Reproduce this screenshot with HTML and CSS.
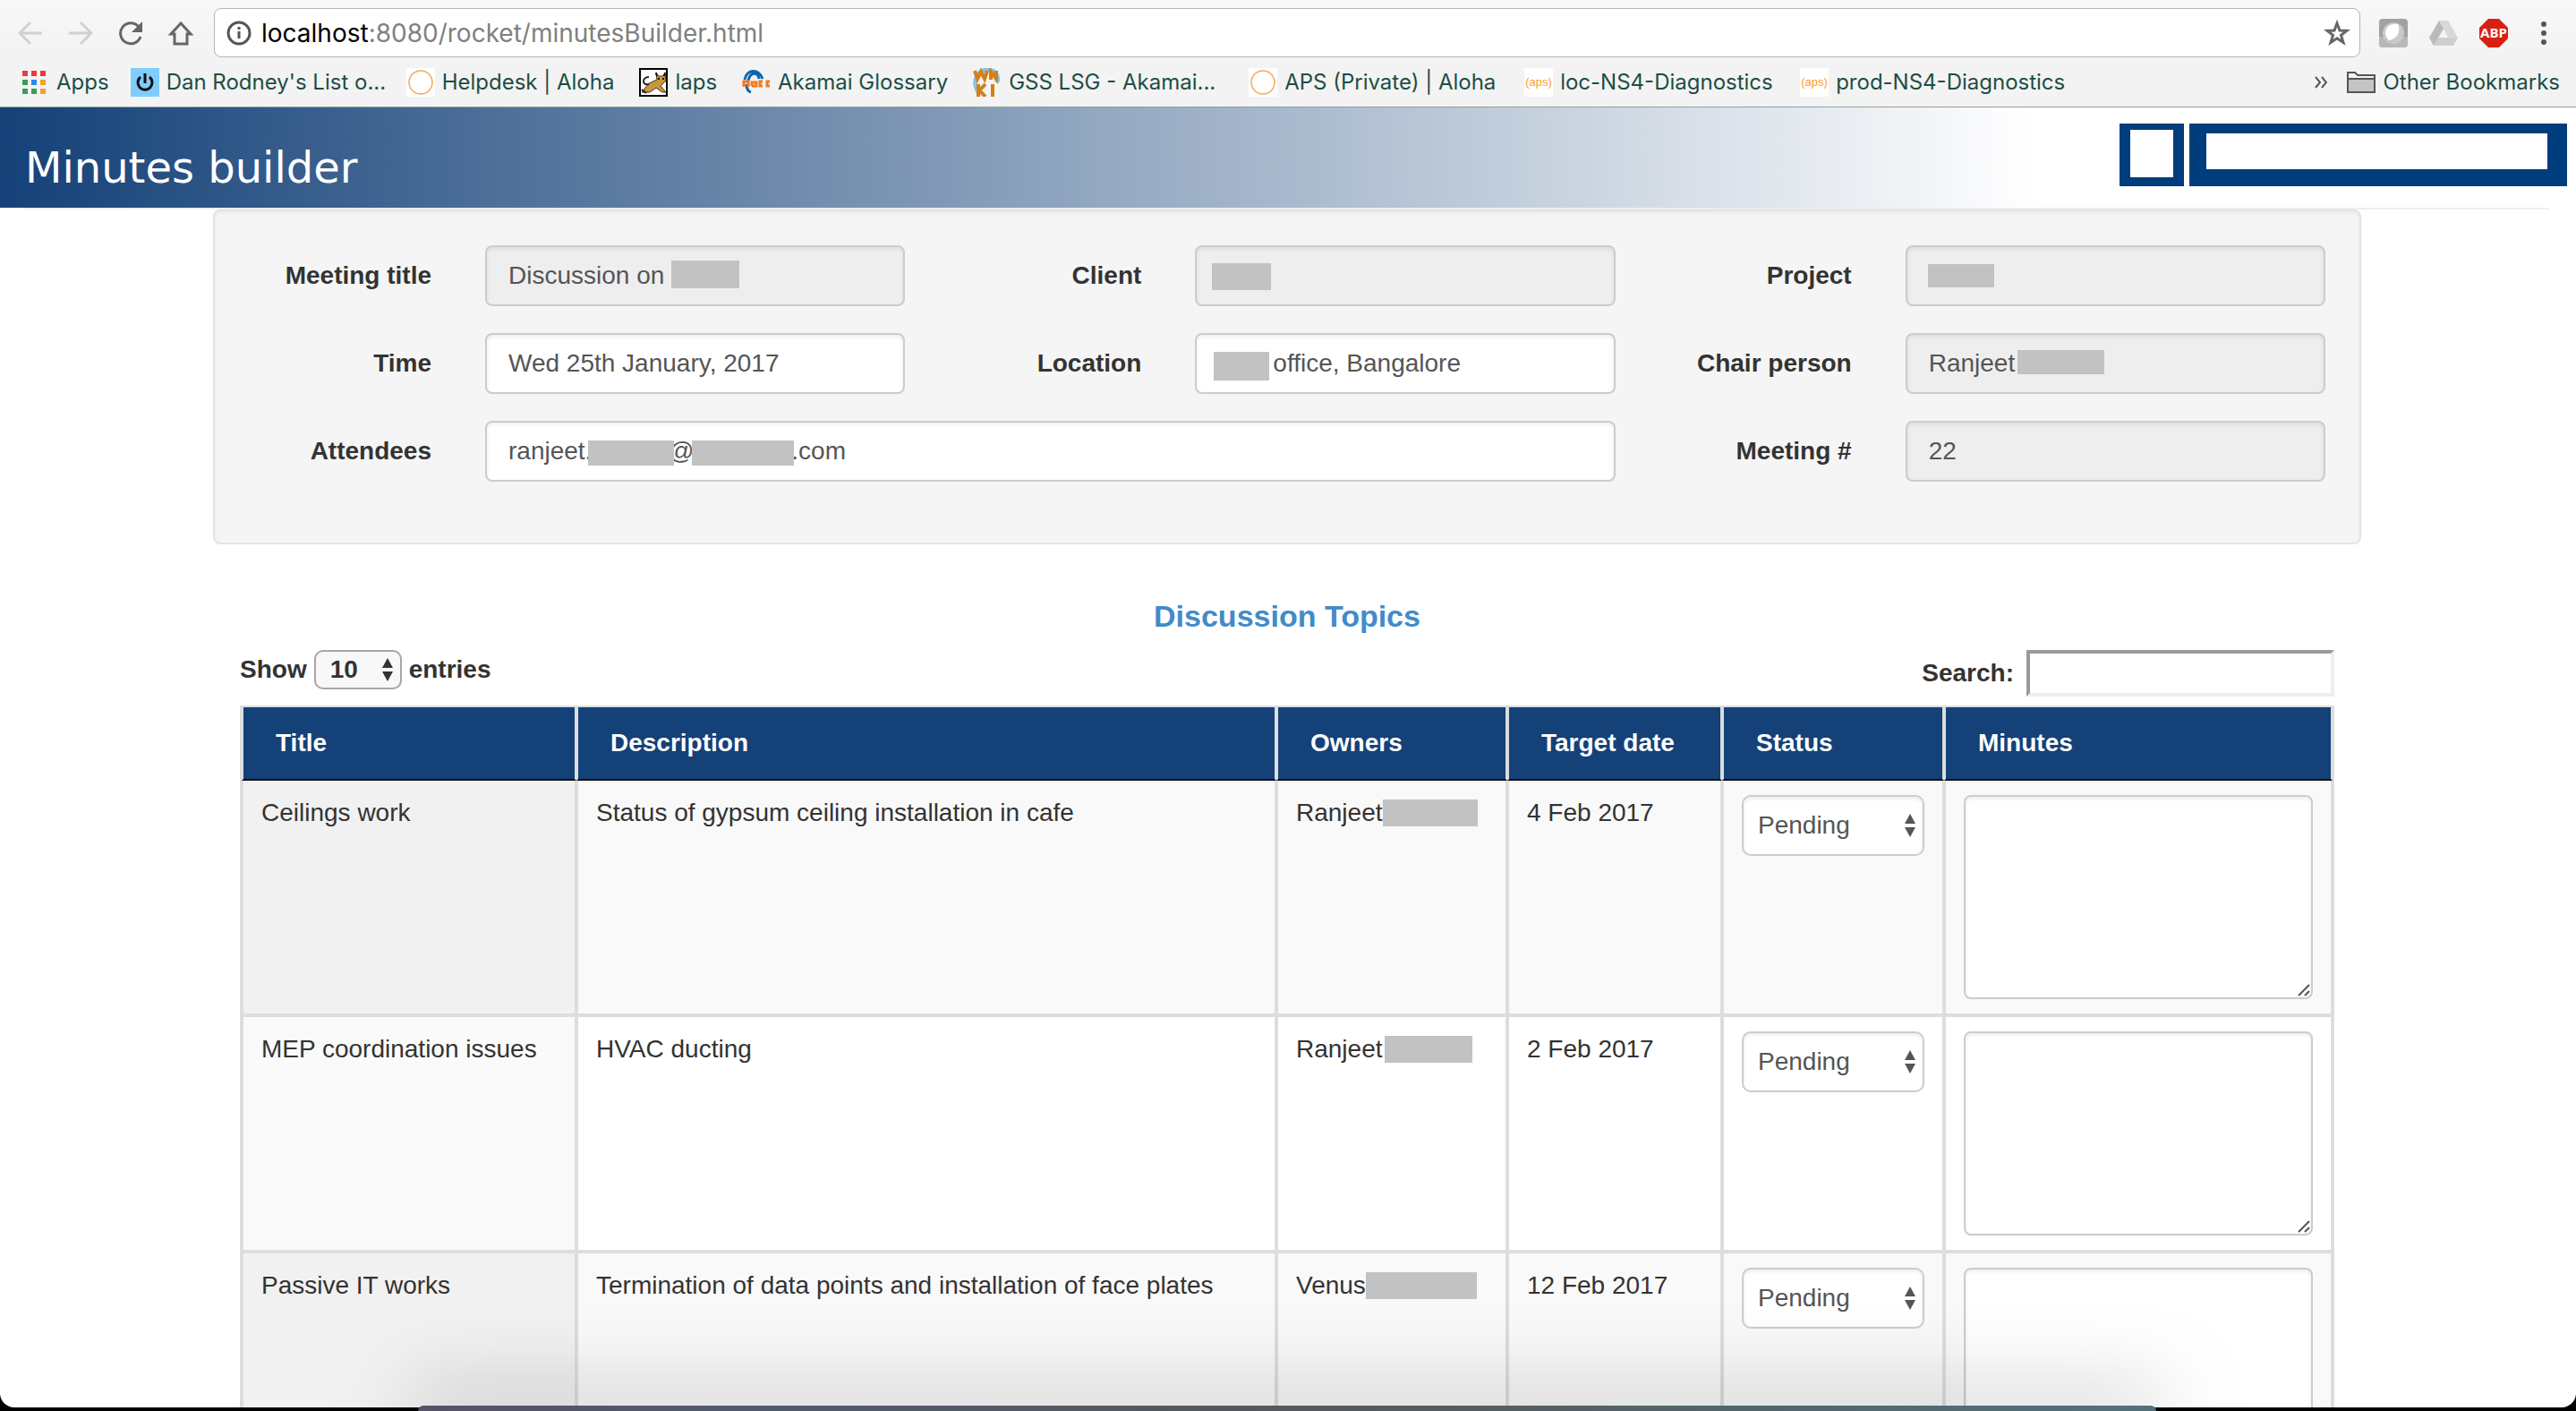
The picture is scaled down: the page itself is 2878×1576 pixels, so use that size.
FILE: index.html
```html
<!DOCTYPE html>
<html lang="en">
<head>
<meta charset="utf-8">
<title>Minutes builder</title>
<link rel="stylesheet" href="styles.css">
</head>
<body>
<div class="window">
  <div class="chrome">
    <div class="toolbar">
      <div class="nav">
        <button class="icon-btn" aria-label="Back"><svg width="28" height="28" viewBox="0 0 28 28" fill="none" stroke="#d0d0d0" stroke-width="3"><path d="M27 14H3M14 2L2 14l12 12"/></svg></button>
        <button class="icon-btn" aria-label="Forward"><svg width="28" height="28" viewBox="0 0 28 28" fill="none" stroke="#d0d0d0" stroke-width="3"><path d="M1 14h24M14 2l12 12-12 12"/></svg></button>
        <button class="icon-btn" aria-label="Reload"><svg width="28" height="28" viewBox="0 0 28 28"><path d="M23 7A11.500 11.500 0 1 0 25 18" fill="none" stroke="#666" stroke-width="3"/><path d="M27 1v12H15z" fill="#666"/></svg></button>
        <button class="icon-btn" aria-label="Home"><svg width="28" height="28" viewBox="0 0 28 28" fill="none" stroke="#666" stroke-width="3"><path d="M14 3L3 15h4v11h14V15h4z"/></svg></button>
      </div>
      <div class="address">
        <svg width="28" height="28" viewBox="0 0 28 28"><circle cx="14" cy="14" r="12" fill="none" stroke="#555" stroke-width="3"/><path d="M12.500 12h3v8h-3zM12.500 7h3v3h-3z" fill="#555"/></svg>
        <div class="url"><span class="url-host">localhost</span>:8080/rocket/minutesBuilder.html</div>
        <button class="icon-btn" aria-label="Bookmark this page"><svg width="30" height="30" viewBox="0 0 30 30" fill="none" stroke="#666" stroke-width="3"><path d="M15 4l3 8 8 .300-6.500 5 2.500 8.200-7-4.700-7 4.700 2.500-8.200L4 12.300l8-.300z"/></svg></button>
      </div>
      <div class="extensions">
        <button class="icon-btn" aria-label="Extension"><svg width="32" height="32" viewBox="0 0 32 32"><rect width="32" height="32" rx="4" fill="#a2a2a2"/><path d="M0 20h32v8a4 4 0 0 1-4 4H4a4 4 0 0 1-4-4z" fill="#b8b8b8"/><circle cx="16" cy="16" r="12" fill="#c9c9c9"/><path d="M21 6c4 9-2 17-10 18C4 18 6 4 21 6z" fill="#fff"/></svg></button>
        <button class="icon-btn" aria-label="Drive"><svg width="32" height="32" viewBox="0 0 32 32"><path d="M11 2h10l11 19H21z" fill="#d8d8d8"/><path d="M11 2l5 9L5 30 0 21z" fill="#b9b9b9"/><path d="M10 21h22l-5 9H5z" fill="#cfcfcf"/></svg></button>
        <button class="icon-btn" aria-label="Adblock Plus"><svg width="32" height="32" viewBox="0 0 32 32"><path d="M10 0h12l10 10v12L22 32H10L0 22V10z" fill="#d91f11"/><text x="16" y="21" class="abp">ABP</text></svg></button>
        <button class="icon-btn" aria-label="Menu"><svg width="32" height="32" viewBox="0 0 32 32" fill="#555"><circle cx="16" cy="6" r="3"/><circle cx="16" cy="16" r="3"/><circle cx="16" cy="26" r="3"/></svg></button>
      </div>
    </div>
    <nav class="bookmarks" aria-label="Bookmarks">
      <a class="bookmark bookmark-apps" href="#"><svg width="26" height="26" viewBox="0 0 26 26"><path d="M0 0h6v6H0zM10 0h6v6h-6zM20 0h6v6h-6z" fill="#f03a37"/><path d="M0 10h6v6H0zM0 20h6v6H0zM10 20h6v6h-6z" fill="#3a9b5a"/><path d="M10 10h6v6h-6z" fill="#2a86f0"/><path d="M20 10h6v6h-6zM20 20h6v6h-6z" fill="#f0a22a"/></svg>Apps</a>
      <a class="bookmark bookmark-wide" href="#"><svg width="32" height="32" viewBox="0 0 32 32"><path d="M0 0h32v32H0z" fill="#7fcdff"/><path d="M11 10a8 8 0 1 0 10 0M16 6v11" fill="none" stroke="#111" stroke-width="3"/></svg>Dan Rodney's List o...</a>
      <a class="bookmark" href="#"><svg width="32" height="32" viewBox="0 0 32 32"><path d="M0 0h32v32H0z" fill="#fff"/><circle cx="16" cy="16" r="13" fill="none" stroke="#f5a95c" stroke-width="1.500"/></svg>Helpdesk | Aloha</a>
      <a class="bookmark" href="#"><svg width="32" height="32" viewBox="0 0 32 32"><path d="M1 1h30v30H1z" fill="#fff" stroke="#000" stroke-width="2"/><path d="M19 6l3 3h4l3-3 1 8-4 4-2 2 6 7h-4l-7-5-7 5H3l8-10 9-4z" fill="#c8963c" stroke="#4a3510"/><path d="M19 5l1 4M29 5l-1 4M21 12h2M26 12h2" stroke="#111" stroke-width="2"/><path d="M11 18C3 20 3 10 11 10M3 24l5 4" fill="none" stroke="#222" stroke-width="2"/></svg>laps</a>
      <a class="bookmark" href="#"><svg width="32" height="32" viewBox="0 0 32 32"><path d="M3 13C5 1 19 0 23 12M7 14c2-10 11-10 12-2M5 18c0 5 1 8 5 9" fill="none" stroke="#0a66b0" stroke-width="3"/><path d="M2 21v-6h5v6M11 20v-4h5v4h-5M23 15h-3v5h3M31 15h-3v5h3" fill="none" stroke="#f47920" stroke-width="3"/></svg>Akamai Glossary</a>
      <a class="bookmark bookmark-wide" href="#"><svg width="32" height="32" viewBox="0 0 32 32"><path d="M6 27C-2 14 6 2 16 2c9 0 13 6 11 14" fill="none" stroke="#85c6e6" stroke-width="5"/><path d="M2 3l3 9 4-8 4 8 3-9M20 13V4l6 8V3M6 18v14M14 18l-7 7 7 7M22 18v14" fill="none" stroke="#d67f18" stroke-width="4"/></svg>GSS LSG - Akamai...</a>
      <a class="bookmark bookmark-wide" href="#"><svg width="32" height="32" viewBox="0 0 32 32"><path d="M0 0h32v32H0z" fill="#fff"/><circle cx="16" cy="16" r="13" fill="none" stroke="#f5a95c" stroke-width="1.500"/></svg>APS (Private) | Aloha</a>
      <a class="bookmark bookmark-wide" href="#"><svg width="32" height="32" viewBox="0 0 32 32"><path d="M0 0h32v32H0z" fill="#fff"/><text x="16" y="20" class="aps">(aps)</text></svg>loc-NS4-Diagnostics</a>
      <a class="bookmark" href="#"><svg width="32" height="32" viewBox="0 0 32 32"><path d="M0 0h32v32H0z" fill="#fff"/><text x="16" y="20" class="aps">(aps)</text></svg>prod-NS4-Diagnostics</a>
      <button class="icon-btn more" aria-label="More bookmarks"><svg width="14" height="14" viewBox="0 0 14 14" fill="none" stroke="#555" stroke-width="2"><path d="M1 1l5 6-5 6M8 1l5 6-5 6"/></svg></button>
      <a class="bookmark bookmark-other" href="#"><svg width="32" height="26" viewBox="0 0 32 26"><path d="M1 24V2h8l3 3h19v19z" fill="#f4f4f4" stroke="#555" stroke-width="2"/><path d="M1 9h30v15H1z" fill="#c4c4c4" stroke="#555" stroke-width="2"/></svg>Other Bookmarks</a>
    </nav>
  </div>

  <header class="banner">
    <h1>Minutes builder</h1>
    <div class="logo"><span class="logo-mark"></span><span class="logo-name"></span></div>
  </header>
  <hr class="rule">

  <main class="container">
    <form class="well">
      <label for="title">Meeting title</label>
      <div class="field"><input id="title" class="control readonly" value="Discussion on" readonly><span class="mask mask-title"></span></div>
      <label for="client">Client</label>
      <div class="field"><input id="client" class="control readonly" readonly><span class="mask mask-client"></span></div>
      <label for="project">Project</label>
      <div class="field"><input id="project" class="control readonly" readonly><span class="mask mask-project"></span></div>

      <label for="time">Time</label>
      <div class="field"><input id="time" class="control" value="Wed 25th January, 2017"></div>
      <label for="location">Location</label>
      <div class="field"><input id="location" class="control control-location" value="office, Bangalore"><span class="mask mask-location"></span></div>
      <label for="chair">Chair person</label>
      <div class="field"><input id="chair" class="control readonly" value="Ranjeet" readonly><span class="mask mask-chair"></span></div>

      <label for="attendees">Attendees</label>
      <div class="field field-wide"><input id="attendees" class="control" value="ranjeet.           @              .com"><span class="mask mask-name"></span><span class="mask mask-domain"></span></div>
      <label for="number">Meeting #</label>
      <div class="field"><input id="number" class="control readonly" value="22" readonly></div>
    </form>

    <section class="topics">
      <h2>Discussion Topics</h2>
      <div class="table-tools">
        <label class="length">Show
          <span class="picker"><select class="length-select"><option>10</option><option>25</option></select><svg width="14" height="26" viewBox="0 0 14 26" fill="#333"><path d="M7 0l6 11H1zM7 26l6-11H1z"/></svg></span>
          entries</label>
        <label class="filter">Search: <input type="search" class="search"></label>
      </div>
      <table>
        <colgroup><col class="c-title"><col><col class="c-owner"><col class="c-date"><col class="c-status"><col class="c-minutes"></colgroup>
        <thead><tr><th>Title</th><th>Description</th><th>Owners</th><th>Target date</th><th>Status</th><th>Minutes</th></tr></thead>
        <tbody>
          <tr>
            <td>Ceilings work</td><td>Status of gypsum ceiling installation in cafe</td>
            <td><div class="owner">Ranjeet<span class="gap gap-a"></span></div></td><td>4 Feb 2017</td>
            <td><div class="picker"><select class="control status" aria-label="Status"><option>Pending</option><option>Done</option></select><svg width="14" height="26" viewBox="0 0 14 26" fill="#555"><path d="M7 0l6 11H1zM7 26l6-11H1z"/></svg></div></td>
            <td><div class="notes"><textarea class="control" aria-label="Minutes"></textarea><svg width="14" height="14" viewBox="0 0 14 14" stroke="#555" stroke-width="2"><path d="M1 13L13 1M8 13l5-5"/></svg></div></td>
          </tr>
          <tr>
            <td>MEP coordination issues</td><td>HVAC ducting</td>
            <td><div class="owner">Ranjeet<span class="gap gap-b"></span></div></td><td>2 Feb 2017</td>
            <td><div class="picker"><select class="control status" aria-label="Status"><option>Pending</option><option>Done</option></select><svg width="14" height="26" viewBox="0 0 14 26" fill="#555"><path d="M7 0l6 11H1zM7 26l6-11H1z"/></svg></div></td>
            <td><div class="notes"><textarea class="control" aria-label="Minutes"></textarea><svg width="14" height="14" viewBox="0 0 14 14" stroke="#555" stroke-width="2"><path d="M1 13L13 1M8 13l5-5"/></svg></div></td>
          </tr>
          <tr>
            <td>Passive IT works</td><td>Termination of data points and installation of face plates</td>
            <td><div class="owner">Venus<span class="gap gap-c"></span></div></td><td>12 Feb 2017</td>
            <td><div class="picker"><select class="control status" aria-label="Status"><option>Pending</option><option>Done</option></select><svg width="14" height="26" viewBox="0 0 14 26" fill="#555"><path d="M7 0l6 11H1zM7 26l6-11H1z"/></svg></div></td>
            <td><div class="notes"><textarea class="control" aria-label="Minutes"></textarea><svg width="14" height="14" viewBox="0 0 14 14" stroke="#555" stroke-width="2"><path d="M1 13L13 1M8 13l5-5"/></svg></div></td>
          </tr>
        </tbody>
      </table>
    </section>
  </main>
</div>
<div class="back-window"></div>
</body>
</html>
```

FILE: styles.css
```css
* { box-sizing: border-box; }

body {
  margin: 0;
  height: 100vh;
  padding-bottom: 4px;
  overflow: hidden;
  position: relative;
  background: #000;
  color: #333;
  font: 28px/40px "Liberation Sans", Arial, sans-serif;
}

.window {
  height: 100%;
  overflow: hidden;
  background: #fff;
  border-radius: 0 0 16px 16px;
}

svg { display: block; flex: none; }

/* Browser bars */
.chrome {
  height: 120px;
  padding: 9px 18px 0;
  background: linear-gradient(#f8f8f8, #f3f3f3 60px);
  border-bottom: 1px solid #8fa09b;
  font-family: Inter, Roboto, sans-serif;
}
.icon-btn {
  padding: 0;
  border: 0;
  background: none;
  font: inherit;
}
.toolbar { display: flex; align-items: center; }
.nav { display: flex; gap: 28px; width: 221px; padding-left: 2px; }
.address {
  flex: 1;
  display: flex;
  align-items: center;
  gap: 11px;
  height: 55px;
  padding: 0 10px 0 13px;
  background: #fff;
  border: 1px solid #b5b5b5;
  border-radius: 8px;
}
.url { flex: 1; color: #808080; font-size: 28px; }
.url-host { color: #000; }
.extensions { display: flex; gap: 24px; padding: 0 2px 0 21px; }
.abp { font: bold 15px "Open Sans", sans-serif; fill: #fff; text-anchor: middle; }
.aps { font: 13px "Liberation Sans", sans-serif; fill: #ff9a2a; text-anchor: middle; }

.bookmarks {
  display: flex;
  align-items: center;
  height: 56px;
  padding-left: 7px;
  font-size: 24px;
}
.bookmark {
  display: flex;
  align-items: center;
  gap: 8px;
  padding-right: 28px;
  color: #1d4e44;
  text-decoration: none;
  white-space: nowrap;
}
.bookmark-apps { gap: 12px; padding-right: 24px; }
.bookmark-wide { width: 308px; padding-right: 0; }
.bookmark-other { padding-right: 0; }
.more { margin: 0 22px 0 auto; }

/* Page banner */
.banner {
  display: flex;
  justify-content: space-between;
  align-items: flex-start;
  height: 112px;
  padding: 18px 10px 0 28px;
  background: linear-gradient(to right, #144178, #fff 79%);
}
.banner h1 {
  margin: 21px 0 0;
  color: #fff;
  font: 48px/56px "DejaVu Sans", Verdana, sans-serif;
}
.logo { display: flex; gap: 6px; }
.logo-mark,
.logo-name { height: 70px; background: #fff; border: solid #003d7c; }
.logo-mark { width: 72px; border-width: 7px 12px 10px; }
.logo-name { width: 422px; border-width: 11px 22px 19px 19px; }
.rule { height: 2px; margin: 0 30px 0 28px; border: 0; background: #eee; }

/* Meeting details */
.container { margin: 0 240px 0 238px; }
.well {
  display: grid;
  grid-template-columns: 204px 1fr 204px 1fr 204px 1fr;
  gap: 30px 60px;
  align-items: center;
  padding: 38px 38px 68px;
  background: #f5f5f5;
  border: 2px solid #e3e3e3;
  border-radius: 8px;
  box-shadow: inset 0 2px 4px rgba(0, 0, 0, .05);
}
.well label { text-align: right; font-weight: bold; }
.field { position: relative; }
.field-wide { grid-column: span 3; }
.control {
  display: block;
  width: 100%;
  height: 68px;
  padding: 12px 24px;
  background: #fff;
  border: 2px solid #ccc;
  border-radius: 8px;
  box-shadow: inset 0 2px 4px rgba(0, 0, 0, .08);
  color: #555;
  font: inherit;
}
.readonly { background: #eee; }
.control-location { padding-left: 85px; }

/* Blocks laid over private details */
.mask { position: absolute; background: #c2c2c2; }
.mask-title { left: 208px; top: 17px; width: 76px; height: 31px; }
.mask-client { left: 19px; top: 20px; width: 66px; height: 30px; }
.mask-project { left: 25px; top: 21px; width: 74px; height: 26px; }
.mask-location { left: 21px; top: 21px; width: 62px; height: 32px; }
.mask-chair { left: 125px; top: 19px; width: 97px; height: 27px; }
.mask-name { left: 115px; top: 22px; width: 96px; height: 28px; }
.mask-domain { left: 231px; top: 22px; width: 114px; height: 28px; }

.owner { display: flex; align-items: center; }
.gap { height: 30px; background: #c2c2c2; }
.gap-a { width: 106px; }
.gap-b { width: 98px; margin-left: 2px; }
.gap-c { width: 124px; }

/* Topics */
.topics { padding: 60px 30px 0; }
.topics h2 {
  margin: 0 0 18px;
  color: #428bca;
  text-align: center;
  font-size: 34px;
  line-height: 40px;
}
.table-tools {
  display: flex;
  justify-content: space-between;
  align-items: flex-start;
  margin-bottom: 10px;
  font-weight: bold;
}
.length { display: flex; align-items: center; gap: 8px; height: 44px; }
.filter { display: flex; align-items: center; gap: 14px; }
.picker { position: relative; }
.picker svg { position: absolute; right: 9px; top: 50%; margin-top: -13px; }
.length-select {
  appearance: none;
  display: block;
  width: 98px;
  height: 44px;
  padding: 0 16px;
  background: #f8f8f8;
  border: 2px solid #a6a6a6;
  border-radius: 10px;
  color: #333;
  font: inherit;
}
.search {
  width: 344px;
  height: 52px;
  padding: 0 8px;
  background: #fff;
  border: 4px inset #eee;
  font: inherit;
}

table {
  width: 100%;
  table-layout: fixed;
  border: 2px solid #ddd;
  border-collapse: separate;
  border-spacing: 0;
}
.c-title { width: 374px; }
.c-owner { width: 258px; }
.c-date { width: 240px; }
.c-status { width: 248px; }
.c-minutes { width: 434px; }
th {
  padding: 20px 36px;
  background: #144178;
  border: solid #ddd;
  border-width: 0 2px 2px;
  border-bottom-color: #111;
  color: #fff;
  text-align: left;
  white-space: nowrap;
}
td {
  padding: 16px 20px;
  border: 2px solid #ddd;
  vertical-align: top;
}
tbody tr:first-child td { border-top: 0; }
tbody tr:nth-child(odd) td { background: #f9f9f9; }
tbody tr:nth-child(odd) td:first-child { background: #f1f1f1; }
tbody tr:nth-child(even) td:first-child { background: #fafafa; }
.status { appearance: none; padding: 0 16px; border-radius: 10px; }
.notes { position: relative; }
.notes textarea { height: 228px; resize: none; }
.notes svg { position: absolute; right: 3px; bottom: 3px; }

/* Edge of the window that sits in front at the bottom of the desktop */
.back-window {
  position: absolute;
  left: 467px;
  right: 469px;
  bottom: 0;
  height: 6px;
  background: linear-gradient(to right, #575266, #4f5a6c 20%, #55585c 50%, #53707a);
  border-radius: 8px 8px 0 0;
  box-shadow: 0 0 90px 6px rgba(0, 0, 0, .5);
}
```
